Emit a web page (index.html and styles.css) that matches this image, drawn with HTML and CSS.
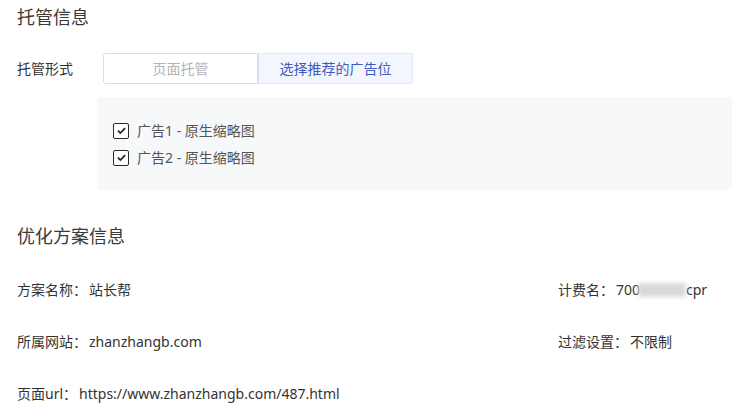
FILE: index.html
```html
<!DOCTYPE html>
<html lang="zh-CN">
<head>
<meta charset="utf-8">
<title>托管信息</title>
<link rel="stylesheet" href="styles.css">
</head>
<body>
<div class="page">
  <h2 class="section-title">托管信息</h2>
  <div class="form-row">
    <div class="form-label">托管形式</div>
    <div class="tabs">
      <div class="tab">页面托管</div>
      <div class="tab active">选择推荐的广告位</div>
    </div>
  </div>
  <div class="ad-box">
    <label class="check-row">
      <span class="checkbox"><svg viewBox="0 0 16 16" width="16" height="16"><path d="M3.6 8.2 L6.6 11.2 L12.4 5.2" fill="none" stroke="#222" stroke-width="2.2"/></svg></span>
      <span class="check-text">广告1 - 原生缩略图</span>
    </label>
    <label class="check-row">
      <span class="checkbox"><svg viewBox="0 0 16 16" width="16" height="16"><path d="M3.6 8.2 L6.6 11.2 L12.4 5.2" fill="none" stroke="#222" stroke-width="2.2"/></svg></span>
      <span class="check-text">广告2 - 原生缩略图</span>
    </label>
  </div>

  <h2 class="section-title second">优化方案信息</h2>
  <div class="info-grid">
    <div class="info-item"><span class="info-label">方案名称：</span><span class="info-value">站长帮</span></div>
    <div class="info-item"><span class="info-label">计费名：</span><span class="info-value">700<span class="blur"></span>cpr</span></div>
    <div class="info-item"><span class="info-label">所属网站：</span><span class="info-value">zhanzhangb.com</span></div>
    <div class="info-item"><span class="info-label">过滤设置：</span><span class="info-value">不限制</span></div>
    <div class="info-item"><span class="info-label">页面url：</span><span class="info-value">https://www.zhanzhangb.com/487.html</span></div>
  </div>
</div>
</body>
</html>
```

FILE: styles.css
```css
html, body {
  margin: 0;
  padding: 0;
  background: #ffffff;
}

body {
  font-family: "Noto Sans", "Noto Sans CJK SC", sans-serif;
  color: #333333;
  font-size: 14px;
}

.page {
  padding: 4px 0 0 17px;
  width: 728px;
}

.section-title {
  margin: 0;
  font-size: 18px;
  font-weight: normal;
  line-height: 26px;
  height: 26px;
  color: #3a3a3a;
}

.section-title.second {
  margin-top: 33px;
}

.form-row {
  display: flex;
  align-items: center;
  margin-top: 23px;
  height: 31px;
}

.form-label {
  width: 86px;
  line-height: 20px;
  color: #333;
}

.tabs {
  display: flex;
  height: 31px;
}

.tab {
  box-sizing: border-box;
  width: 155px;
  height: 31px;
  line-height: 29px;
  text-align: center;
  border: 1px solid #dcdde3;
  border-radius: 3px 0 0 3px;
  color: #b3b3ba;
  background: #fff;
}

.tab.active {
  border-color: #e1e8f8;
  border-left-color: #d9e2f5;
  background: #f3f6fe;
  color: #3d5bc2;
  border-radius: 0 3px 3px 0;
}

.ad-box {
  box-sizing: border-box;
  margin: 13px 0 0 80px;
  width: 635px;
  height: 93px;
  padding: 20px 0 0 16px;
  background: #f7f8fa;
  border-radius: 4px;
}

.check-row {
  display: flex;
  align-items: center;
  height: 27px;
}

.checkbox {
  box-sizing: border-box;
  width: 16px;
  height: 16px;
  border: 1.5px solid #2a2a2a;
  border-radius: 2px;
  background: #fff;
  display: flex;
  align-items: center;
  justify-content: center;
  margin-right: 8px;
}

.checkbox svg {
  width: 13px;
  height: 13px;
}

.check-text {
  color: #555;
  line-height: 20px;
}

.info-grid {
  display: grid;
  grid-template-columns: 541px auto;
  grid-auto-rows: 52px;
  margin-top: 15px;
}

.info-item {
  display: flex;
  align-items: center;
  line-height: 20px;
}

.info-label {
  color: #333;
}

.info-value {
  color: #333;
  display: inline-flex;
  align-items: center;
  margin-left: 2px;
}

.blur {
  display: inline-block;
  width: 48px;
  height: 14px;
  background: #d9d9d9;
  filter: blur(2px);
  margin-left: -2px;
}
```
